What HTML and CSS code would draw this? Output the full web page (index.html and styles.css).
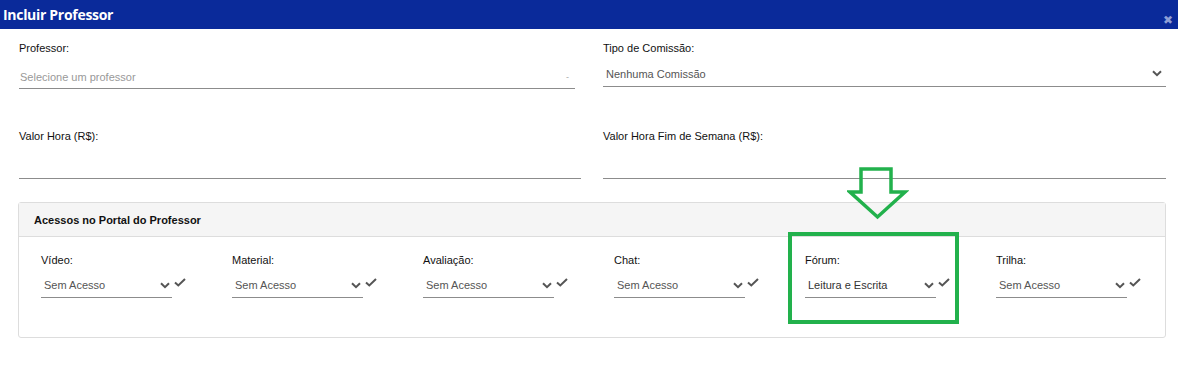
FILE: index.html
```html
<!DOCTYPE html>
<html lang="pt-BR">

<head>
    <meta charset="UTF-8">
    <title>Incluir Professor</title>
    <link rel="stylesheet" href="styles.css">
</head>

<body>
    <div class="modal">
        <div class="modal-header">
            <h1>Incluir Professor</h1>
            <span class="fechar">&#10006;</span>
        </div>

        <div class="modal-body">
            <div class="linha linha-1">
                <div class="campo">
                    <label>Professor:</label>
                    <div class="select select-professor">
                        <span class="placeholder">Selecione um professor</span>
                        <span class="seta-pequena">-</span>
                    </div>
                </div>
                <div class="campo campo-comissao">
                    <label>Tipo de Comissão:</label>
                    <div class="select select-comissao">
                        <span>Nenhuma Comissão</span>
                        <svg class="chevron" width="10" height="7" viewBox="0 0 10 7"><path d="M1 1.2 L5 5.2 L9 1.2" fill="none" stroke="#555" stroke-width="2"/></svg>
                    </div>
                </div>
            </div>

            <div class="linha linha-2">
                <div class="campo">
                    <label>Valor Hora (R$):</label>
                    <div class="input"></div>
                </div>
                <div class="campo">
                    <label>Valor Hora Fim de Semana (R$):</label>
                    <div class="input"></div>
                </div>
            </div>

            <!-- Acessos -->
            <div class="painel">
                <div class="painel-header">Acessos no Portal do Professor</div>
                <div class="painel-body">
                    <div class="acesso">
                        <label>Vídeo:</label>
                        <div class="acesso-linha">
                            <div class="select select-acesso"><span>Sem Acesso</span><svg class="chevron" width="10" height="7" viewBox="0 0 10 7"><path d="M1 1.2 L5 5.2 L9 1.2" fill="none" stroke="#555" stroke-width="2"/></svg></div>
                            <svg class="check" width="12" height="9" viewBox="0 0 12 9"><path d="M1 4.5 L4.3 7.5 L11 1" fill="none" stroke="#555" stroke-width="2"/></svg>
                        </div>
                    </div>
                    <div class="acesso">
                        <label>Material:</label>
                        <div class="acesso-linha">
                            <div class="select select-acesso"><span>Sem Acesso</span><svg class="chevron" width="10" height="7" viewBox="0 0 10 7"><path d="M1 1.2 L5 5.2 L9 1.2" fill="none" stroke="#555" stroke-width="2"/></svg></div>
                            <svg class="check" width="12" height="9" viewBox="0 0 12 9"><path d="M1 4.5 L4.3 7.5 L11 1" fill="none" stroke="#555" stroke-width="2"/></svg>
                        </div>
                    </div>
                    <div class="acesso">
                        <label>Avaliação:</label>
                        <div class="acesso-linha">
                            <div class="select select-acesso"><span>Sem Acesso</span><svg class="chevron" width="10" height="7" viewBox="0 0 10 7"><path d="M1 1.2 L5 5.2 L9 1.2" fill="none" stroke="#555" stroke-width="2"/></svg></div>
                            <svg class="check" width="12" height="9" viewBox="0 0 12 9"><path d="M1 4.5 L4.3 7.5 L11 1" fill="none" stroke="#555" stroke-width="2"/></svg>
                        </div>
                    </div>
                    <div class="acesso">
                        <label>Chat:</label>
                        <div class="acesso-linha">
                            <div class="select select-acesso"><span>Sem Acesso</span><svg class="chevron" width="10" height="7" viewBox="0 0 10 7"><path d="M1 1.2 L5 5.2 L9 1.2" fill="none" stroke="#555" stroke-width="2"/></svg></div>
                            <svg class="check" width="12" height="9" viewBox="0 0 12 9"><path d="M1 4.5 L4.3 7.5 L11 1" fill="none" stroke="#555" stroke-width="2"/></svg>
                        </div>
                    </div>
                    <div class="acesso">
                        <label>Fórum:</label>
                        <div class="acesso-linha">
                            <div class="select select-acesso escuro"><span>Leitura e Escrita</span><svg class="chevron" width="10" height="7" viewBox="0 0 10 7"><path d="M1 1.2 L5 5.2 L9 1.2" fill="none" stroke="#555" stroke-width="2"/></svg></div>
                            <svg class="check" width="12" height="9" viewBox="0 0 12 9"><path d="M1 4.5 L4.3 7.5 L11 1" fill="none" stroke="#555" stroke-width="2"/></svg>
                        </div>
                    </div>
                    <div class="acesso">
                        <label>Trilha:</label>
                        <div class="acesso-linha">
                            <div class="select select-acesso"><span>Sem Acesso</span><svg class="chevron" width="10" height="7" viewBox="0 0 10 7"><path d="M1 1.2 L5 5.2 L9 1.2" fill="none" stroke="#555" stroke-width="2"/></svg></div>
                            <svg class="check" width="12" height="9" viewBox="0 0 12 9"><path d="M1 4.5 L4.3 7.5 L11 1" fill="none" stroke="#555" stroke-width="2"/></svg>
                        </div>
                    </div>
                </div>
            </div>
        </div>

        <!-- Destaque (anotação) -->
        <svg class="seta-destaque" width="62" height="54" viewBox="0 0 62 54">
            <path d="M14 2 L44 2 L44 25 L58 25 L30.5 50 L3 25 L14 25 Z" fill="none" stroke="#22b14c" stroke-width="3.5" stroke-linejoin="miter"/>
        </svg>
        <div class="caixa-destaque"></div>
    </div>
</body>

</html>
```

FILE: styles.css
```css
/* Reset básico */
* {
    margin: 0;
    padding: 0;
    box-sizing: border-box;
}

body {
    background-color: #fff;
    font-family: 'Liberation Sans', Arial, sans-serif;
    font-size: 11px;
    color: #222;
}

.modal {
    position: relative;
    width: 1178px;
    height: 365px;
}

/* Cabeçalho */
.modal-header {
    height: 29px;
    background-color: #0a2a9a;
    display: flex;
    align-items: center;
    justify-content: space-between;
    padding: 0 5px 0 3px;
}

.modal-header h1 {
    font-family: 'Open Sans', sans-serif;
    font-size: 14px;
    font-weight: 700;
    color: #fff;
    letter-spacing: -0.3px;
    margin-top: -1px;
}

.fechar {
    color: #8f9fd6;
    font-size: 12px;
    margin-top: 10px;
}

/* Corpo */
.modal-body {
    padding: 0 12px 0 19px;
}

.linha {
    display: grid;
    grid-template-columns: 562px 563px;
    column-gap: 22px;
}

.linha-1 {
    padding-top: 13px;
}

.linha-2 {
    padding-top: 41px;
}

.campo label {
    display: block;
    line-height: 13px;
    color: #111;
}

.select {
    display: flex;
    align-items: flex-end;
    justify-content: space-between;
    border-bottom: 1px solid #8c8c8c;
    color: #555;
    line-height: 13px;
}

.select-professor {
    height: 34px;
    margin-right: 6px;
    padding: 0 6px 4px 1px;
}

.placeholder {
    color: #999;
}

.seta-pequena {
    color: #aaa;
    font-size: 9px;
}

.select-comissao {
    height: 32px;
    padding: 0 4px 5px 3px;
}

.select-comissao .chevron {
    margin-bottom: 4px;
}

.input {
    height: 36px;
    border-bottom: 1px solid #8c8c8c;
}

/* Painel de acessos */
.painel {
    margin: 23px 0 0 -1px;
    border: 1px solid #ddd;
    border-radius: 3px;
    height: 136px;
}

.painel-header {
    height: 34px;
    background-color: #f5f5f5;
    border-bottom: 1px solid #ddd;
    padding: 11px 0 0 15px;
    font-weight: bold;
    color: #111;
}

.painel-body {
    display: grid;
    grid-template-columns: repeat(6, 191px);
    padding: 17px 0 0 22px;
}

.acesso label {
    display: block;
    line-height: 13px;
    color: #111;
}

.acesso-linha {
    display: flex;
    align-items: flex-start;
}

.select-acesso {
    width: 131px;
    height: 31px;
    padding: 0 2px 5px 3px;
}

.select-acesso.escuro {
    color: #333;
}

.select-acesso .chevron {
    margin-bottom: 3px;
}

.check {
    margin: 11px 0 0 2px;
}

/* Anotações em verde */
.seta-destaque {
    position: absolute;
    left: 847px;
    top: 167px;
}

.caixa-destaque {
    position: absolute;
    left: 788px;
    top: 232px;
    width: 171px;
    height: 92px;
    border: 4px solid #22b14c;
}
```
